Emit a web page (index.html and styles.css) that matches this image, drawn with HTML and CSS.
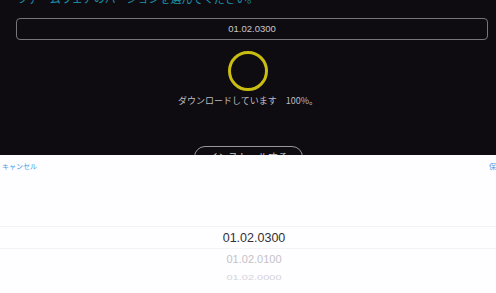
FILE: index.html
```html
<!DOCTYPE html>
<html lang="ja">
<head>
<meta charset="utf-8">
<link rel="stylesheet" href="styles.css">
</head>
<body>
<div class="screen">
  <section class="dark">
    <h1 class="title">ファームウェアのバージョンを選んでください。</h1>
    <div class="field">01.02.0300</div>
    <div class="spinner"></div>
    <p class="status">ダウンロードしています　100%。</p>
    <div class="btn-row"><span class="install">インストールする</span></div>
  </section>
  <section class="sheet">
    <div class="toolbar">
      <span class="cancel">キャンセル</span>
      <span class="save">保存</span>
    </div>
    <div class="picker">
      <div class="row selected">01.02.0300</div>
      <div class="row next">01.02.0100</div>
      <div class="row far">01.02.0000</div>
    </div>
  </section>
</div>
</body>
</html>
```
FILE: styles.css
```css
html, body {
  margin: 0;
  padding: 0;
  background: #ffffff;
}
body {
  font-family: "Noto Sans CJK JP", "Noto Sans", sans-serif;
  width: 496px;
  height: 293px;
  overflow: hidden;
}
.screen {
  display: flex;
  flex-direction: column;
  height: 293px;
}
.dark {
  background: #0f0c11;
  height: 155px;
  flex-shrink: 0;
  overflow: hidden;
  padding: 0 8px 0 16px;
  box-sizing: border-box;
  display: flex;
  flex-direction: column;
}
.title {
  margin: -10px 0 0 1px;
  font-size: 11px;
  line-height: 16px;
  font-weight: 400;
  color: #1c94aa;
  flex-shrink: 0;
}
.field {
  margin-top: 12px;
  height: 22px;
  flex-shrink: 0;
  box-sizing: border-box;
  border: 1px solid #77747a;
  border-radius: 4px;
  color: #c9c7cc;
  font-family: "Liberation Sans", "Noto Sans", sans-serif;
  font-size: 9.5px;
  line-height: 20px;
  text-align: center;
  width: 472px;
}
.spinner {
  margin: 11px auto 0;
  width: 40px;
  height: 40px;
  flex-shrink: 0;
  box-sizing: border-box;
  border: 3px solid #c9bd12;
  border-radius: 50%;
  position: relative;
  left: -4px;
}
.status {
  margin: 3px 0 0;
  text-align: center;
  font-size: 9px;
  line-height: 14px;
  color: #bdbbc0;
  flex-shrink: 0;
  position: relative;
  left: -4px;
}
.btn-row {
  display: flex;
  justify-content: center;
  margin-top: 38px;
  flex-shrink: 0;
  position: relative;
  left: -4px;
}
.install {
  width: 109px;
  height: 22px;
  box-sizing: border-box;
  border: 1px solid #9a979c;
  border-radius: 11px;
  color: #c9c7cc;
  font-size: 10px;
  line-height: 19px;
  text-align: center;
}
.sheet {
  flex: 1;
  background: #fefdff;
  display: flex;
  flex-direction: column;
}
.toolbar {
  display: flex;
  justify-content: space-between;
  height: 24px;
  padding: 6px 0 0 2px;
  box-sizing: border-box;
  font-size: 7px;
  line-height: 10px;
  color: #4d9be6;
  width: 503px;
}
.picker {
  margin-top: 47px;
  display: flex;
  flex-direction: column;
  align-items: center;
  font-family: "Liberation Sans", "Noto Sans", sans-serif;
}
.row {
  width: 100%;
  padding-left: 12px;
  box-sizing: border-box;
  text-align: center;
}
.selected {
  height: 23px;
  line-height: 22px;
  font-size: 12.5px;
  color: #333135;
  border-top: 1px solid #f4f2f6;
  border-bottom: 1px solid #f4f2f6;
}
.next {
  margin-top: 3px;
  font-size: 11px;
  line-height: 14px;
  color: #c4c2c7;
}
.far {
  margin-top: 6px;
  font-size: 11px;
  line-height: 12px;
  color: #d4d2d7;
  transform: scaleY(0.6);
}
```
